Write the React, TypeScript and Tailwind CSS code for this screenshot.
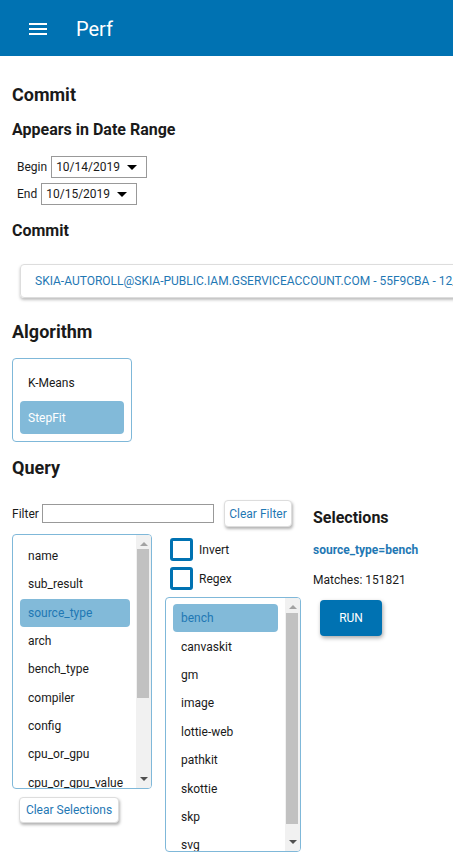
import React from "react";

const keys = [
  "name",
  "sub_result",
  "source_type",
  "arch",
  "bench_type",
  "compiler",
  "config",
  "cpu_or_gpu",
  "cpu_or_gpu_value",
];

const values = [
  "bench",
  "canvaskit",
  "gm",
  "image",
  "lottie-web",
  "pathkit",
  "skottie",
  "skp",
  "svg",
];

function Scrollbar({ thumbTop, thumbHeight }: { thumbTop: number; thumbHeight: number }) {
  return (
    <div className="relative w-[15px] h-full bg-[#f1f1f1] shrink-0">
      <div className="absolute left-[4px] top-[7px] w-0 h-0 border-l-[4px] border-r-[4px] border-b-[4px] border-l-transparent border-r-transparent border-b-[#a3a3a3]" />
      <div
        className="absolute left-[1px] w-[12px] bg-[#c1c1c1]"
        style={{ top: thumbTop, height: thumbHeight }}
      />
      <div className="absolute left-[4px] bottom-[7px] w-0 h-0 border-l-[4px] border-r-[4px] border-t-[4px] border-l-transparent border-r-transparent border-t-[#505050]" />
    </div>
  );
}

function ListBox({
  items,
  selected,
  width,
  itemWidth,
  itemHeight,
  padTop,
  thumbTop,
  thumbHeight,
}: {
  items: string[];
  selected: string;
  width: string;
  itemWidth: string;
  itemHeight: string;
  padTop: string;
  thumbTop: number;
  thumbHeight: number;
}) {
  return (
    <div className={`${width} h-[255px] border border-[#7fb8d9] rounded-[4px] bg-white flex overflow-hidden`}>
      <div className={`flex-1 ${padTop} pl-[7px] overflow-hidden`}>
        {items.map((k) => (
          <div
            key={k}
            className={`${itemWidth} ${itemHeight} pl-[8px] flex items-center rounded-[4px] text-[12px] whitespace-nowrap ${
              k === selected ? "bg-[#82bad9] text-[#1f78b4]" : "text-[#1a1a1a]"
            }`}
          >
            {k}
          </div>
        ))}
      </div>
      <Scrollbar thumbTop={thumbTop} thumbHeight={thumbHeight} />
    </div>
  );
}

function Check({ label }: { label: string }) {
  return (
    <div className="flex items-center h-[23px]">
      <div className="w-[23px] h-[23px] border-[3px] border-[#0072b2] rounded-[3px] bg-white" />
      <span className="ml-[6px] text-[12px] text-[#1a1a1a]">{label}</span>
    </div>
  );
}

function DateSelect({ label, value }: { label: string; value: string }) {
  return (
    <div className="pl-[5px] flex items-center text-[12px]">
      <span>{label}</span>
      <div className="ml-[4px] w-[96px] h-[22px] border border-[#999] flex items-center pl-[4px]">
        <span>{value}</span>
        <span className="ml-auto mr-[9px] w-0 h-0 border-l-[5px] border-r-[5px] border-t-[5px] border-l-transparent border-r-transparent border-t-black" />
      </div>
    </div>
  );
}

export default function App() {
  return (
    <div className="w-[453px] min-h-[866px] overflow-hidden bg-white text-[#1a1a1a] font-['Roboto',sans-serif]">
      <div className="h-14 bg-[#0072b2] flex items-center">
        <div className="ml-[29px] mt-[2px] flex flex-col gap-[3px]">
          <div className="w-[18px] h-[2px] bg-white" />
          <div className="w-[18px] h-[2px] bg-white" />
          <div className="w-[18px] h-[2px] bg-white" />
        </div>
        <span className="ml-[29px] mt-[2px] text-[20px] text-white">Perf</span>
      </div>

      <div className="px-3">
        <h2 className="mt-[27px] text-[18px] leading-[24px] font-bold">Commit</h2>
        <h3 className="mt-[13px] text-[16px] leading-[20px] font-bold">Appears in Date Range</h3>

        <div className="mt-[16px]">
          <DateSelect label="Begin" value="10/14/2019" />
        </div>
        <div className="mt-[5px]">
          <DateSelect label="End" value="10/15/2019" />
        </div>

        <h3 className="mt-[16px] text-[16px] leading-[20px] font-bold">Commit</h3>
        <div className="mt-[23px] ml-2 w-max h-[34px] pl-[14px] pr-[20px] flex items-center border border-[#ddd] rounded-[4px] shadow-[0_2px_3px_rgba(0,0,0,0.25)] text-[12px] text-[#1f78b4] whitespace-nowrap">
          SKIA-AUTOROLL@SKIA-PUBLIC.IAM.GSERVICEACCOUNT.COM - 55F9CBA - 12/14/2019
        </div>

        <h2 className="mt-[22px] text-[18px] leading-[24px] font-bold">Algorithm</h2>
        <div className="mt-[14px] w-[120px] h-[84px] border border-[#7fb8d9] rounded-[4px] p-[7px] flex flex-col gap-[2px]">
          <div className="h-[33px] pl-[8px] flex items-center text-[12px]">K-Means</div>
          <div className="h-[33px] pl-[8px] flex items-center text-[12px] text-white bg-[#82bad9] rounded-[4px]">StepFit</div>
        </div>

        <h2 className="mt-[14px] text-[18px] leading-[24px] font-bold">Query</h2>

        <div className="mt-[20px] flex">
          <div className="w-[289px]">
            <div className="h-[27px] flex items-center">
              <span className="text-[12px] w-[30px]">Filter</span>
              <div className="w-[172px] h-[19px] border border-[#999] bg-white" />
              <button className="ml-[10px] w-[68px] h-[27px] rounded-[4px] border border-[#ddd] bg-white shadow-[1px_2px_3px_rgba(0,0,0,0.3)] text-[12px] text-[#1f78b4]">
                Clear Filter
              </button>
            </div>

            <div className="mt-[7px] flex">
              <div className="flex flex-col">
                <ListBox
                  items={keys}
                  selected="source_type"
                  width="w-[140px]"
                  itemWidth="w-[110px]"
                  itemHeight="h-[28.3px]"
                  padTop="pt-[7px]"
                  thumbTop={14}
                  thumbHeight={149}
                />
                <button className="mt-[8px] ml-[7px] w-[100px] h-[26px] rounded-[4px] border border-[#ddd] bg-white shadow-[1px_2px_3px_rgba(0,0,0,0.3)] text-[12px] text-[#1f78b4]">
                  Clear Selections
                </button>
              </div>
              <div className="ml-[13px] flex flex-col">
                <div className="mt-[4px] ml-[5px] flex flex-col gap-[6px]">
                  <Check label="Invert" />
                  <Check label="Regex" />
                </div>
                <div className="mt-[7px]">
                  <ListBox
                    items={values}
                    selected="bench"
                    width="w-[136px]"
                    itemWidth="w-[105px]"
                    itemHeight="h-[28.4px]"
                    padTop="pt-[6px]"
                    thumbTop={15}
                    thumbHeight={211}
                  />
                </div>
              </div>
            </div>
          </div>

          <div className="ml-[12px]">
            <h3 className="mt-[8px] text-[16px] leading-[20px] font-bold">Selections</h3>
            <div className="mt-[14px] text-[12px] leading-[16px] font-bold text-[#1f78b4]">source_type=bench</div>
            <div className="mt-[14px] text-[12px] leading-[16px]">Matches: 151821</div>
            <button className="mt-[12px] ml-[7px] w-[62px] h-[36px] rounded-[4px] bg-[#0072b2] text-white text-[12px] shadow-[1px_2px_4px_rgba(0,0,0,0.35)]">
              RUN
            </button>
          </div>
        </div>
      </div>
    </div>
  );
}
